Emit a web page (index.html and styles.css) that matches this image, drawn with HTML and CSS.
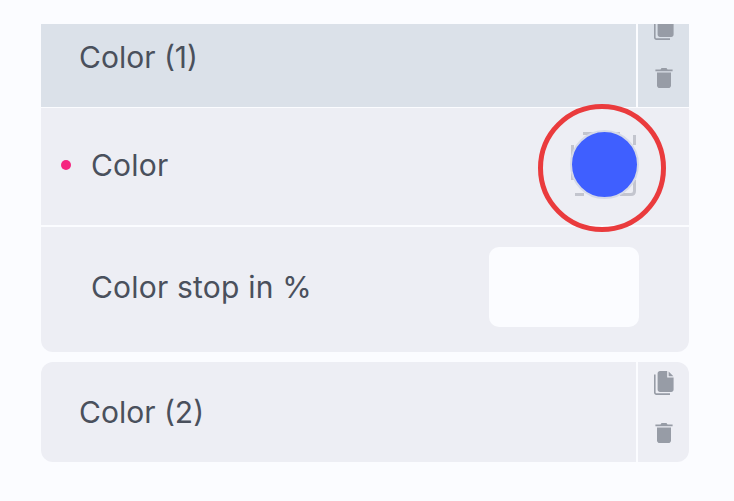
FILE: index.html
```html
<!DOCTYPE html>
<html lang="en">
<head>
<meta charset="utf-8">
<title>Color stops</title>
<link rel="stylesheet" href="styles.css">
</head>
<body>
<main class="list">
  <section class="card card-first">
    <header class="head head-active">
      <div class="head-title">Color (1)</div>
      <div class="tools">
        <svg class="icon" viewBox="0 0 20 24"><use href="#copy"/></svg>
        <svg class="icon icon-trash" viewBox="0 0 18 20"><use href="#trash"/></svg>
      </div>
    </header>
    <div class="row row-color">
      <span class="dot"></span>
      <span class="label">Color</span>
      <span class="swatch-wrap">
        <svg class="swatch-dash" viewBox="0 0 64 64">
          <path d="M12 1.5H49M1.5 13V48M63.5 3V13M4 62.5H13M49 62.5H60Q63.5 62.5 63.5 59V48"/>
        </svg>
        <span class="swatch"></span>
      </span>
    </div>
    <div class="row row-stop">
      <span class="label">Color stop in %</span>
      <span class="field"></span>
    </div>
  </section>
  <section class="card">
    <header class="head">
      <div class="head-title">Color (2)</div>
      <div class="tools">
        <svg class="icon" viewBox="0 0 20 24"><use href="#copy"/></svg>
        <svg class="icon icon-trash" viewBox="0 0 18 20"><use href="#trash"/></svg>
      </div>
    </header>
  </section>
</main>
<div class="ring"></div>
<svg class="defs" width="0" height="0">
  <symbol id="copy" viewBox="0 0 20 24">
    <path fill="#979ca6" d="M1.6 3.6H0V21.6C0 22.9 1.1 24 2.4 24H16V22.2H2.6C2 22.2 1.6 21.8 1.6 21.2Z"/>
    <path fill="#979ca6" d="M6 0H13.2V6.6H19.6V18.6C19.6 19.9 18.6 21 17.2 21H6C4.7 21 3.6 19.9 3.6 18.6V2.4C3.6 1.1 4.7 0 6 0Z"/>
    <path fill="#979ca6" d="M14.6 0.4 19.4 5.2H14.6Z"/>
  </symbol>
  <symbol id="trash" viewBox="0 0 18 20">
    <path fill="#979ca6" d="M6.5 0H11.5L12.5 1.6H17.6V3.2H0.4V1.6H5.5Z"/>
    <path fill="#979ca6" d="M2 4.6H16V17.4C16 18.8 14.9 20 13.4 20H4.6C3.1 20 2 18.8 2 17.4Z"/>
  </symbol>
</svg>
</body>
</html>
```
FILE: styles.css
```css
* { box-sizing: border-box; }
html, body { margin: 0; height: 100%; }
body {
  background: #fbfcff;
  font-family: Inter, "Liberation Sans", sans-serif;
  color: #4a505c;
  overflow: hidden;
  position: relative;
}
.list {
  display: flex;
  flex-direction: column;
  gap: 10px;
  width: 648px;
  height: 477px;
  margin-top: 24px;
  margin-left: 41px;
  overflow: hidden;
}
body::before { content: ""; display: block; height: 24px; margin-bottom: -24px; }
.card {
  flex: none;
  background: #edeef4;
  border-radius: 12px;
  overflow: hidden;
}
.card-first { margin-top: -17px; }
.head {
  display: flex;
  height: 100px;
}
.card-first .head { height: 101px; border-bottom: 1px solid #fbfcff; }
.head-active { background: #dbe1e9; }
.head-title {
  flex: 1;
  display: flex;
  align-items: center;
  padding-left: 38px;
  font-size: 30px;
  border-right: 2px solid #fbfcff;
}
.tools {
  width: 51px;
  flex: none;
  display: flex;
  flex-direction: column;
  align-items: center;
  justify-content: flex-end;
  gap: 28px;
  padding-bottom: 19px;
}
.icon { width: 20px; height: 24px; display: block; }
.icon-trash { width: 18px; height: 20px; }
.row {
  display: flex;
  align-items: center;
  padding-left: 50px;
  font-size: 30px;
  letter-spacing: 0.2px;
}
.row-color {
  position: relative;
  height: 119px;
  padding-bottom: 4px;
  border-bottom: 2px solid #fbfcff;
}
.row-stop {
  height: 125px;
  justify-content: space-between;
  padding-right: 50px;
  padding-bottom: 5px;
}
.dot {
  position: absolute;
  left: 20px;
  top: 52px;
  width: 10px;
  height: 10px;
  border-radius: 50%;
  background: #f5247f;
}
.swatch-wrap {
  position: absolute;
  left: 530px;
  top: 24px;
  width: 64px;
  height: 64px;
}
.swatch-dash {
  position: absolute;
  inset: 0;
  width: 64px;
  height: 64px;
  overflow: visible;
  fill: none;
  stroke: #c3c5ce;
  stroke-width: 3;
}
.swatch {
  position: absolute;
  left: -1px;
  top: -2px;
  width: 69px;
  height: 69px;
  border-radius: 50%;
  background: #3f5fff;
  border: 2px solid #d5d9e8;
}
.field {
  width: 150px;
  height: 80px;
  background: #fbfcff;
  border-radius: 10px;
}
.ring {
  position: absolute;
  left: 538px;
  top: 104px;
  width: 128px;
  height: 128px;
  border: 5px solid #ea3b3d;
  border-radius: 50%;
}
.defs { position: absolute; }
```
